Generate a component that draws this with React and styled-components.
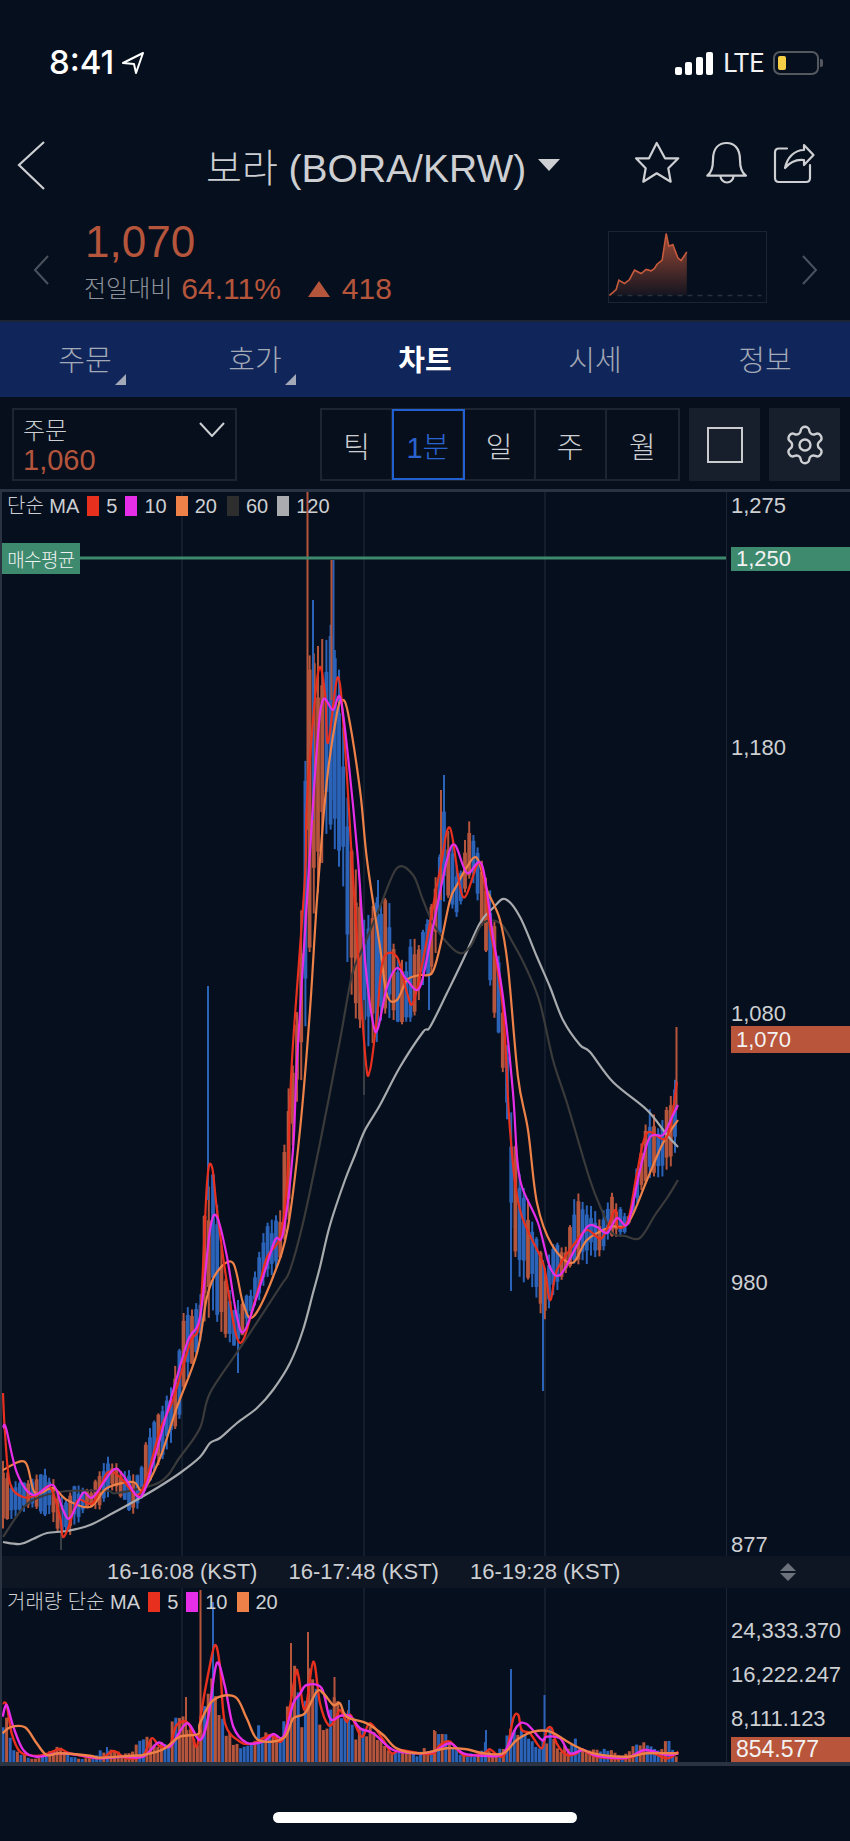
import React from 'react';
import styled, { createGlobalStyle } from 'styled-components';
import { Settings } from 'lucide-react';

const BG = '#060f1e';
const RED = '#b5553c';
const BLUE = '#2b63b8';
const TEXT = '#cdcfd2';
const MUTED = '#8d929a';
const FONT = '"Liberation Sans", "Noto Sans CJK KR", sans-serif';

const GlobalStyle = createGlobalStyle`
  html, body { margin: 0; padding: 0; background: ${BG}; }
  body { font-family: ${FONT}; font-weight: 300; }
`;

const Page = styled.div`
  width: 850px;
  height: 1841px;
  overflow: hidden;
  background: ${BG};
  color: ${TEXT};
`;

/* status bar */
const StatusBar = styled.div`
  height: 110px;
  box-sizing: border-box;
  padding: 46px 31px 0 49px;
  display: flex;
  align-items: flex-start;
`;
const Time = styled.span`
  font-family: Inter, sans-serif;
  font-size: 33px;
  line-height: 32px;
  font-weight: 500;
  color: #fff;
  margin-right: 7px;
`;
const StatusRight = styled.div`
  margin-left: auto;
  margin-top: 3px;
  display: flex;
  align-items: center;
  height: 28px;
`;
const Signal = styled.div`
  display: flex;
  align-items: flex-end;
  gap: 3.4px;
  height: 23px;
  margin-right: 10px;
`;
const SignalBar = styled.i`
  display: block;
  width: 7px;
  height: ${p => p.$h}px;
  background: #fff;
  border-radius: 2px;
`;
const Lte = styled.span`
  font-family: Roboto, sans-serif;
  font-size: 26px;
  font-weight: 400;
  color: #f2f2f2;
  margin-right: 9px;
`;
const Battery = styled.div`
  position: relative;
  width: 46px;
  height: 24px;
  box-sizing: border-box;
  border: 2px solid #55595f;
  border-radius: 7px;
  padding: 3px;
  &::after {
    content: '';
    position: absolute;
    right: -6px;
    top: 6px;
    width: 3px;
    height: 8px;
    background: #55595f;
    border-radius: 0 2px 2px 0;
  }
`;
const BatteryFill = styled.div`
  width: 8px;
  height: 100%;
  background: #f7cf46;
  border-radius: 2px;
`;

/* title row */
const Header = styled.div`
  height: 110px;
  display: flex;
  align-items: center;
  position: relative;
  padding-left: 17px;
  box-sizing: border-box;
`;
const Title = styled.div`
  margin-left: 160px;
  display: flex;
  align-items: center;
  font-size: 39px;
  color: ${TEXT};
  white-space: nowrap;
`;
const Caret = styled.i`
  display: block;
  width: 0;
  height: 0;
  margin-left: 12px;
  border-left: 11px solid transparent;
  border-right: 11px solid transparent;
  border-top: 12px solid ${TEXT};
`;
const HeaderIcons = styled.div`
  margin-left: auto;
  display: flex;
  align-items: center;
`;

/* price row */
const PriceRow = styled.div`
  height: 100px;
  box-sizing: border-box;
  display: flex;
  align-items: center;
  padding-left: 33px;
`;
const PriceBlock = styled.div`
  margin-left: 34px;
  display: flex;
  flex-direction: column;
  align-self: flex-start;
`;
const Price = styled.div`
  font-size: 44px;
  line-height: 44px;
  margin-left: 1px;
  color: ${RED};
`;
const Delta = styled.div`
  display: flex;
  align-items: center;
  font-size: 30px;
  line-height: 34px;
  margin-top: 8px;
  color: ${RED};
`;
const DeltaLabel = styled.span`
  color: ${MUTED};
  font-size: 24px;
  margin-right: 9px;
`;
const UpMark = styled.i`
  display: block;
  width: 0;
  height: 0;
  margin: 0 12px 0 27px;
  border-left: 11.5px solid transparent;
  border-right: 11.5px solid transparent;
  border-bottom: 16px solid ${RED};
`;
const MiniChart = styled.div`
  margin-left: auto;
  margin-right: 34px;
  width: 159px;
  height: 72px;
  box-sizing: border-box;
  border: 1.5px solid #1b2431;
  align-self: flex-start;
  margin-top: 11px;
`;
const NextIcon = styled.div`
  margin-right: 32px;
  display: flex;
`;

/* tabs */
const Tabs = styled.div`
  height: 75px;
  background: #10265a;
  border-top: 2px solid #1b2536;
  display: grid;
  grid-template-columns: repeat(5, 170px);
`;
const Tab = styled.div`
  position: relative;
  display: flex;
  align-items: center;
  justify-content: center;
  font-size: 29px;
  padding-bottom: 3px;
  font-weight: ${p => (p.$active ? 700 : 300)};
  color: ${p => (p.$active ? '#fff' : '#a3a9b6')};
`;
const TabCorner = styled.i`
  position: absolute;
  right: 44px;
  bottom: 12px;
  width: 0;
  height: 0;
  border-left: 11px solid transparent;
  border-bottom: 11px solid #a3a9b6;
`;

/* toolbar */
const Toolbar = styled.div`
  height: 92px;
  box-sizing: border-box;
  padding: 11px 9px 8px 12px;
  display: flex;
  background: #070f1d;
`;
const Order = styled.div`
  width: 225px;
  flex: none;
  box-sizing: border-box;
  border: 2px solid #1d2531;
  padding: 7px 9px;
  position: relative;
`;
const OrderLabel = styled.div`
  font-size: 24px;
  line-height: 28px;
  color: ${TEXT};
`;
const OrderPrice = styled.div`
  font-size: 29px;
  line-height: 30px;
  color: ${RED};
`;
const OrderChevron = styled.svg`
  position: absolute;
  right: 10px;
  top: 12px;
`;
const Segments = styled.div`
  margin-left: 83px;
  flex: none;
  display: grid;
  grid-template-columns: repeat(5, 1fr);
  border: 2px solid #1d2531;
  box-sizing: border-box;
  width: 360px;
`;
const Segment = styled.div`
  display: flex;
  align-items: center;
  justify-content: center;
  font-size: 29px;
  box-sizing: border-box;
  border-right: 2px solid #1d2531;
  color: ${TEXT};
  &:last-child { border-right: 0; }
  ${p => p.$active && `
    color: #2a63cf;
    outline: 2px solid #2160d0;
    outline-offset: -1px;
    z-index: 1;
  `}
`;
const ToolButton = styled.div`
  width: 71px;
  flex: none;
  margin-left: 9px;
  background: #171f2c;
  display: flex;
  align-items: center;
  justify-content: center;
  color: ${TEXT};
`;
const SquareMark = styled.i`
  display: block;
  width: 36px;
  height: 36px;
  box-sizing: border-box;
  border: 2.5px solid #c9cbcf;
`;

/* charts */
const ChartFrame = styled.div`
  border-top: 3px solid #2a3342;
  border-bottom: 4px solid #2a3342;
  border-left: 2px solid #2a3342;
  box-sizing: border-box;
`;
const Pane = styled.div`
  display: flex;
  height: ${p => p.$h}px;
`;
const Plot = styled.div`
  position: relative;
  width: 724px;
  height: 100%;
  overflow: hidden;
  svg { display: block; }
`;
const Legend = styled.div`
  position: absolute;
  left: 5px;
  top: 3px;
  display: flex;
  align-items: center;
  font-size: 20px;
  line-height: 22px;
  color: ${TEXT};
  white-space: nowrap;
`;
const Swatch = styled.i`
  display: block;
  width: 12px;
  height: 20px;
  margin: 0 7px 0 ${p => p.$gap}px;
  background: ${p => p.$color};
`;
const AvgTag = styled.div`
  position: absolute;
  left: 0;
  top: 51px;
  width: 78px;
  height: 31px;
  display: flex;
  align-items: center;
  justify-content: center;
  background: #3e8a6e;
  color: #f0f3f2;
  font-size: 19px;
  letter-spacing: -0.6px;
  white-space: nowrap;
`;
const Axis = styled.div`
  position: relative;
  width: 124px;
  height: 100%;
  border-left: 1.5px solid #1b2431;
  box-sizing: border-box;
  font-size: 22px;
`;
const AxisLabel = styled.div`
  position: absolute;
  left: 4px;
  top: ${p => p.$y}px;
  height: 26px;
  line-height: 26px;
  transform: translateY(-50%);
  color: ${TEXT};
  white-space: nowrap;
`;
const AxisTag = styled.div`
  position: absolute;
  left: 4px;
  right: 0;
  top: ${p => p.$y}px;
  height: ${p => p.$h}px;
  line-height: ${p => p.$h}px;
  padding-left: 5px;
  background: ${p => p.$bg};
  color: #f2f2f2;
  font-size: ${p => p.$size}px;
`;
const TimeAxis = styled.div`
  height: 32px;
  background: #0e1624;
  display: flex;
  align-items: center;
  padding-left: 89.5px;
  font-size: 22px;
  color: ${TEXT};
`;
const TimeLabel = styled.div`
  width: 181.5px;
  text-align: center;
  white-space: nowrap;
`;
const Updown = styled.svg`
  margin-left: 143px;
`;
const HomeArea = styled.div`
  height: 75px;
  display: flex;
  justify-content: center;
  padding-top: 46px;
  box-sizing: border-box;
`;
const HomeBar = styled.div`
  width: 304px;
  height: 11px;
  border-radius: 6px;
  background: #fff;
`;

/* data */
const trace = (pts, ox, oy) => pts.map(([x, y]) => [ox + x / 3, oy + y / 3]);

const smooth = pts => {
  let d = `M${pts[0][0].toFixed(1)} ${pts[0][1].toFixed(1)}`;
  for (let i = 0; i < pts.length - 1; i++) {
    const p0 = pts[i - 1] || pts[i];
    const p1 = pts[i];
    const p2 = pts[i + 1];
    const p3 = pts[i + 2] || p2;
    const c1x = p1[0] + (p2[0] - p0[0]) / 6;
    const c1y = p1[1] + (p2[1] - p0[1]) / 6;
    const c2x = p2[0] - (p3[0] - p1[0]) / 6;
    const c2y = p2[1] - (p3[1] - p1[1]) / 6;
    d += `C${c1x.toFixed(1)} ${c1y.toFixed(1)} ${c2x.toFixed(1)} ${c2y.toFixed(1)} ${p2[0].toFixed(1)} ${p2[1].toFixed(1)}`;
  }
  return d;
};

const lerp = (pts, x) => {
  if (x <= pts[0][0]) return pts[0][1];
  for (let i = 1; i < pts.length; i++) {
    if (x <= pts[i][0]) {
      const t = (x - pts[i - 1][0]) / (pts[i][0] - pts[i - 1][0]);
      return pts[i - 1][1] + t * (pts[i][1] - pts[i - 1][1]);
    }
  }
  return pts[pts.length - 1][1];
};

const seeded = seed => () => {
  seed = (seed + 0x6d2b79f5) | 0;
  let t = Math.imul(seed ^ (seed >>> 15), 1 | seed);
  t = (t + Math.imul(t ^ (t >>> 7), 61 | t)) ^ t;
  return ((t ^ (t >>> 14)) >>> 0) / 4294967296;
};

const MA5 = [[3,1393],[5,1433],[10,1483],[23,1497],[37,1495],[50,1487],[60,1517],[63,1537],[70,1523],[78,1500],[93,1503],[107,1473],[120,1477],[137,1495],[147,1477],[160,1430],[173,1400],[190,1343],[200,1317],[207,1183],[212,1167],[217,1210],[227,1283],[240,1343],[257,1293],[267,1257],[280,1237],[287,1183],[292,1060],[305,877],[307,800],[318,673],[325,693],[328,743],[338,677],[345,747],[353,877],[365,1053],[370,1070],[377,1017],[383,960],[397,957],[407,993],[413,1003],[423,960],[440,870],[450,828],[463,897],[480,863],[490,927],[503,1010],[510,1130],[520,1210],[543,1263],[550,1300],[557,1270],[575,1243],[587,1230],[602,1238],[615,1210],[618,1227],[628,1220],[637,1173],[647,1133],[667,1137],[677,1082]];
const MA10 = [[3,1428],[6,1428],[17,1473],[33,1495],[53,1485],[63,1510],[70,1518],[83,1493],[93,1497],[113,1470],[123,1475],[140,1497],[153,1463],[167,1413],[187,1343],[200,1317],[210,1230],[217,1217],[227,1257],[237,1317],[245,1330],[263,1277],[275,1240],[283,1233],[293,1150],[297,1060],[307,900],[317,747],[323,700],[333,710],[340,697],[347,747],[358,860],[365,960],[373,1023],[378,1028],[387,987],[397,968],[407,980],[420,987],[433,927],[447,860],[455,845],[467,873],[482,865],[493,937],[503,997],[513,1093],[517,1157],[522,1187],[538,1223],[550,1267],[560,1275],[573,1253],[587,1227],[597,1227],[607,1233],[617,1218],[628,1223],[640,1170],[650,1137],[663,1135],[672,1117],[678,1105]];
const MA20 = [[3,1470],[25,1462],[35,1493],[53,1488],[67,1500],[90,1507],[107,1488],[133,1482],[143,1490],[160,1458],[177,1407],[197,1353],[207,1297],[217,1272],[233,1263],[243,1303],[253,1317],[273,1277],[288,1227],[300,1130],[310,1010],[317,900],[327,780],[337,713],[342,700],[348,713],[360,790],[367,860],[380,947],[387,995],[397,1000],[407,980],[420,975],[432,973],[440,947],[450,900],[457,885],[467,867],[477,858],[487,890],[500,920],[508,967],[518,1077],[528,1130],[537,1203],[552,1245],[572,1263],[587,1240],[610,1227],[628,1223],[647,1180],[663,1143],[678,1120]];
const MA60 = [[3,1537],[23,1508],[40,1497],[67,1491],[107,1491],[117,1493],[160,1482],[180,1457],[200,1428],[210,1393],[240,1348],[280,1287],[290,1270],[303,1223],[320,1143],[340,1040],[352,975],[362,950],[380,907],[397,868],[413,875],[423,900],[435,927],[457,952],[470,947],[483,923],[500,923],[513,943],[527,970],[540,1003],[553,1060],[567,1103],[590,1180],[603,1213],[612,1233],[625,1236],[640,1238],[655,1215],[667,1198],[678,1180]];
const MA120 = [[3,1542],[20,1544],[33,1539],[47,1533],[67,1531],[90,1525],[113,1513],[133,1502],[157,1488],[180,1473],[200,1457],[210,1443],[220,1438],[237,1423],[257,1408],[273,1390],[290,1363],[303,1330],[313,1293],[320,1267],[330,1225],[345,1180],[355,1155],[365,1130],[380,1105],[400,1067],[423,1032],[430,1027],[447,993],[463,960],[480,923],[493,908],[505,899],[520,917],[537,957],[550,987],[563,1020],[580,1045],[590,1052],[613,1082],[647,1110],[667,1135],[678,1147]];

const UPPER = [[3,1450],[10,1480],[30,1480],[45,1465],[55,1480],[65,1500],[75,1480],[90,1490],[107,1455],[125,1470],[140,1470],[150,1420],[165,1395],[175,1365],[185,1300],[200,1300],[205,1190],[210,1170],[215,1170],[225,1270],[235,1310],[250,1290],[262,1230],[270,1215],[282,1205],[286,1100],[292,1060],[298,1000],[302,870],[307,700],[311,620],[320,630],[328,610],[333,600],[340,650],[350,830],[358,860],[365,900],[380,890],[388,880],[395,950],[405,960],[410,930],[420,940],[430,900],[440,840],[444,790],[450,830],[460,870],[468,813],[475,840],[490,880],[500,960],[510,1080],[516,1150],[525,1190],[535,1220],[545,1265],[555,1235],[565,1250],[575,1190],[590,1200],[600,1215],[612,1190],[620,1205],[630,1215],[640,1150],[650,1100],[660,1125],[668,1090],[676,1075]];
const LOWER = [[3,1535],[12,1520],[30,1510],[50,1520],[61,1540],[70,1540],[85,1510],[100,1510],[115,1490],[135,1520],[145,1490],[160,1470],[175,1440],[190,1375],[205,1330],[215,1330],[230,1345],[238,1350],[250,1320],[265,1290],[278,1270],[288,1230],[295,1120],[303,1100],[310,960],[318,900],[330,860],[340,870],[350,1000],[360,1040],[364,1075],[372,1060],[380,1040],[390,1020],[405,1030],[412,1025],[420,1000],[435,970],[445,900],[458,920],[470,880],[480,910],[490,1000],[500,1050],[507,1130],[511,1250],[520,1280],[530,1295],[540,1310],[543,1330],[555,1300],[568,1270],[585,1265],[597,1265],[610,1240],[625,1235],[640,1200],[655,1180],[668,1175],[678,1160]];

// long wicks that stand out from the envelope: x, y1, y2, colour
const SPIKES = [
  [307.5, 492, 830, RED], [333.5, 560, 800, BLUE], [331.5, 560, 700, RED], [208, 986, 1200, BLUE],
  [444, 775, 900, BLUE], [441, 790, 900, RED], [543, 1260, 1391, BLUE], [511, 1130, 1291, BLUE],
  [676.5, 1027, 1110, RED], [238, 1300, 1373, BLUE], [61, 1500, 1550, '#3a3f46'], [364, 1000, 1095, '#3a3f46'],
  [378, 880, 1020, BLUE], [429, 920, 1010, BLUE], [313, 600, 820, BLUE],
];

const buildCandles = () => {
  const rnd = seeded(41);
  const out = [];
  for (let x = 3; x <= 678; x += 4.2) {
    const up = lerp(UPPER, x);
    const lo = lerp(LOWER, x);
    const range = lo - up;
    const top = up + rnd() * 0.15 * range;
    const bot = lo - rnd() * 0.15 * range;
    const a = top + rnd() * 0.22 * range;
    const b = bot - rnd() * 0.22 * range;
    out.push({ x, top, bot, a, b: Math.max(b, a + 4), color: rnd() > 0.5 ? RED : BLUE });
  }
  return out;
};

const VOL_TOP = [
  ...trace([[8,340],[25,400],[40,470],[70,490],[100,505],[130,490],[175,458],[200,490],[250,505],[320,470],[390,490],[435,425],[470,460],[505,435],[525,360],[548,360],[570,400],[590,460],[610,280],[625,215],[650,300],[660,370],[700,440],[730,460],[775,405],[800,405],[840,440],[855,345],[885,200],[905,380],[925,155],[945,210],[960,370],[985,400],[1003,262],[1020,370]], 0, 1590),
  ...trace([[27,330],[50,420],[70,380],[100,420],[120,420],[150,490],[195,470],[225,495],[250,470],[270,490],[283,420],[310,430],[322,425],[360,490],[420,490],[437,420],[450,490],[485,470],[500,435],[525,380],[560,420],[590,470],[630,410],[660,470],[703,440],[740,480],[805,468],[850,495],[872,460],[910,448],[940,475],[985,448],[1015,500]], 340, 1590),
];
const VOL_SPIKES = [[200.5, 1590, RED], [213, 1602, BLUE], [291, 1643, RED], [308, 1632, RED], [334.5, 1677, RED], [349, 1700, BLUE], [186, 1697, RED], [511, 1669, BLUE], [544.5, 1695, BLUE], [486, 1730, BLUE], [434, 1730, RED], [107, 1747, BLUE]];

const buildVolume = () => {
  const rnd = seeded(7);
  const out = [];
  for (let x = 3; x <= 678; x += 3.6) {
    const top = lerp(VOL_TOP, x);
    const h = (1762 - top) * (0.6 + rnd() * 0.4);
    out.push({ x, h, color: rnd() > 0.5 ? RED : BLUE });
  }
  return out;
};

const VOL5 = [
  ...trace([[8,340],[20,345],[35,430],[60,485],[100,497],[130,495],[180,478],[210,490],[300,505],[340,483],[380,505],[430,495],[455,445],[480,470],[510,465],[530,405],[565,400],[590,470],[605,360],[625,250],[645,165],[660,230],[675,400],[720,455],[760,460],[810,435],[850,445],[885,260],[895,255],[915,360],[940,215],[960,340],[985,405],[1005,390]], 0, 1590),
  ...trace([[0,360],[20,395],[32,375],[65,440],[90,400],[130,450],[155,490],[180,480],[240,490],[280,490],[300,465],[330,455],[370,495],[430,490],[450,478],[480,500],[500,480],[520,385],[535,375],[545,420],[570,430],[605,475],[620,420],[635,415],[650,460],[680,495],[710,490],[725,478],[770,500],[860,505],[900,490],[920,480],[980,505],[1015,485]], 340, 1590),
];
const VOL10 = [
  ...trace([[8,380],[20,345],[40,410],[70,480],[110,500],[180,490],[250,497],[300,505],[370,500],[430,500],[475,458],[510,470],[560,400],[600,450],[625,380],[650,220],[675,290],[700,410],[740,458],[790,455],[820,432],[850,440],[880,340],[900,312],[920,285],[965,295],[990,385]], 0, 1590),
  ...trace([[0,378],[30,378],[60,415],[100,430],[160,480],[230,490],[280,485],[330,460],[370,490],[430,497],[490,490],[530,410],[560,402],[605,450],[620,440],[660,445],[690,490],[730,480],[770,497],[860,503],[915,480],[980,495],[1015,490]], 340, 1590),
];
const VOL20 = [
  ...trace([[8,430],[30,412],[75,412],[110,460],[140,495],[180,490],[270,497],[300,503],[400,497],[430,495],[490,478],[540,440],[595,432],[600,400],[640,330],[705,320],[740,385],[775,450],[850,445],[880,385],[915,370],[950,305],[970,310],[1000,345]], 0, 1590),
  ...trace([[0,340],[20,380],[80,400],[130,435],[170,475],[240,490],[320,475],[380,478],[430,490],[490,490],[530,450],[580,425],[630,425],[700,465],[760,490],[860,500],[920,490],[1015,490]], 340, 1590),
];

const GRID_X = [182, 364, 545];

const PriceChart = () => (
  <svg width="724" height="1064" viewBox="2 492 724 1064">
    {GRID_X.map(x => <line key={x} x1={x} x2={x} y1="492" y2="1556" stroke="#1a2331" strokeWidth="1.5" />)}
    {buildCandles().map(c => (
      <g key={c.x}>
        <rect x={c.x - 1} y={c.top} width="2" height={c.bot - c.top} fill={c.color} />
        <rect x={c.x - 1.9} y={c.a} width="3.8" height={c.b - c.a} fill={c.color} />
      </g>
    ))}
    {SPIKES.map(([x, a, b, color]) => <rect key={x} x={x - 1} y={a} width="2" height={b - a} fill={color} />)}
    <path d={smooth(MA120)} fill="none" stroke="#a8abae" strokeWidth="2.2" />
    <path d={smooth(MA60)} fill="none" stroke="#3a3a3a" strokeWidth="2.2" />
    <path d={smooth(MA20)} fill="none" stroke="#ee8147" strokeWidth="2.2" />
    <path d={smooth(MA5)} fill="none" stroke="#e8301f" strokeWidth="2.2" />
    <path d={smooth(MA10)} fill="none" stroke="#e62ee8" strokeWidth="2.2" />
    <rect x="2" y="556.5" width="724" height="3" fill="#3e8a6e" />
  </svg>
);

const VolumeChart = () => (
  <svg width="724" height="174" viewBox="2 1588 724 174">
    {GRID_X.map(x => <line key={x} x1={x} x2={x} y1="1588" y2="1762" stroke="#1a2331" strokeWidth="1.5" />)}
    {buildVolume().map(b => <rect key={b.x} x={b.x - 1.5} y={1762 - b.h} width="3" height={b.h} fill={b.color} />)}
    {VOL_SPIKES.map(([x, y, color]) => <rect key={x} x={x - 1} y={y} width="2" height={1762 - y} fill={color} />)}
    <path d={smooth(VOL5)} fill="none" stroke="#e8301f" strokeWidth="2.4" />
    <path d={smooth(VOL10)} fill="none" stroke="#e62ee8" strokeWidth="2.4" />
    <path d={smooth(VOL20)} fill="none" stroke="#ee8147" strokeWidth="2.4" />
  </svg>
);

const MINI = trace([[30,498],[50,480],[58,452],[75,462],[90,450],[105,422],[125,432],[140,420],[155,424],[165,417],[172,405],[188,392],[200,312],[208,350],[220,345],[235,385],[245,393],[262,367]], 600, 130);
const miniLine = MINI.map(p => p.join(',')).join(' ');

const MiniGraph = () => (
  <svg width="156" height="69" viewBox="609.5 232.5 156 69" style={{ display: 'block' }}>
    <defs>
      <linearGradient id="miniFill" x1="0" x2="0" y1="0" y2="1">
        <stop offset="0" stopColor="#b9553a" stopOpacity="0.85" />
        <stop offset="1" stopColor="#b9553a" stopOpacity="0.08" />
      </linearGradient>
    </defs>
    <polygon points={`${miniLine} 687.3,296 610,296`} fill="url(#miniFill)" />
    <polyline points={miniLine} fill="none" stroke="#c65a3c" strokeWidth="1.6" />
    <line x1="618" x2="762" y1="296" y2="296" stroke="#27303d" strokeWidth="1.5" strokeDasharray="5 5" />
  </svg>
);

const Chevron = ({ points, color, width, height, box, strokeWidth = 2 }) => (
  <svg width={width} height={height} viewBox={box} style={{ display: 'block' }}>
    <polyline points={points} fill="none" stroke={color} strokeWidth={strokeWidth} />
  </svg>
);

const HeaderGlyphs = () => (
  <svg width="220" height="60" viewBox="630 135 220 60" style={{ display: 'block' }} fill="none" stroke="#cdcfd2" strokeWidth="2.2" strokeLinejoin="round" strokeLinecap="round">
    <polygon points="656.7,143 665,158.3 678.3,158.3 668.3,168.3 670.7,181.7 656.7,173.3 643.3,181.7 645.7,168.3 636,158.3 649,158.3" />
    <path d="M707.3 175.7C711 173 713 168 713 160C713 148 719 143 726.7 143C734 143 740 148 740 160C740 168 742 173 746 175.7Z" />
    <path d="M720.5 176a6.5 6.5 0 0 0 13 0" />
    <path d="M787 148.5H779Q775 148.5 775 152.5V178Q775 182 779 182H806Q810 182 810 178V165" />
    <path d="M804 145L813.5 155L804 165V160C796 159 790 162 785 168C787 158 794 150 804 150Z" />
  </svg>
);

const App = () => (
  <Page>
    <GlobalStyle />
    <StatusBar>
      <Time>8:41</Time>
      <svg width="24" height="24" viewBox="0 0 24 24" style={{ marginTop: 5 }}>
        <polygon points="22,2 2,12 13,13 15,22" fill="none" stroke="#fff" strokeWidth="2" strokeLinejoin="round" />
      </svg>
      <StatusRight>
        <Signal>
          {[8, 13, 18, 23].map(h => <SignalBar key={h} $h={h} />)}
        </Signal>
        <Lte>LTE</Lte>
        <Battery><BatteryFill /></Battery>
      </StatusRight>
    </StatusBar>

    <Header>
      <Chevron points="27,1 2,24 27,48" color="#cdcfd2" width="29" height="49" box="0 0 29 49" strokeWidth="2.2" />
      <Title>보라 (BORA/KRW)<Caret /></Title>
      <HeaderIcons><HeaderGlyphs /></HeaderIcons>
    </Header>

    <PriceRow>
      <Chevron points="15,1 2,15 15,29" color="#4b525e" width="17" height="30" box="0 0 17 30" />
      <PriceBlock>
        <Price>1,070</Price>
        <Delta>
          <DeltaLabel>전일대비</DeltaLabel>
          64.11%
          <UpMark />
          418
        </Delta>
      </PriceBlock>
      <MiniChart><MiniGraph /></MiniChart>
      <NextIcon>
        <Chevron points="2,1 15,15 2,29" color="#4b525e" width="17" height="30" box="0 0 17 30" />
      </NextIcon>
    </PriceRow>

    <Tabs>
      <Tab>주문<TabCorner /></Tab>
      <Tab>호가<TabCorner /></Tab>
      <Tab $active>차트</Tab>
      <Tab>시세</Tab>
      <Tab>정보</Tab>
    </Tabs>

    <Toolbar>
      <Order>
        <OrderLabel>주문</OrderLabel>
        <OrderPrice>1,060</OrderPrice>
        <OrderChevron width="26" height="15" viewBox="0 0 26 15">
          <polyline points="1,1 13,14 25,1" fill="none" stroke="#cdcfd2" strokeWidth="2" />
        </OrderChevron>
      </Order>
      <Segments>
        <Segment>틱</Segment>
        <Segment $active>1분</Segment>
        <Segment>일</Segment>
        <Segment>주</Segment>
        <Segment>월</Segment>
      </Segments>
      <ToolButton><SquareMark /></ToolButton>
      <ToolButton><Settings size={44} strokeWidth={1.3} /></ToolButton>
    </Toolbar>

    <ChartFrame>
      <Pane $h={1064}>
        <Plot>
          <PriceChart />
          <Legend>
            단순 MA
            <Swatch $gap={8} $color="#e8301f" />5
            <Swatch $gap={8} $color="#e62ee8" />10
            <Swatch $gap={9} $color="#ee8147" />20
            <Swatch $gap={10} $color="#2e2e2e" />60
            <Swatch $gap={9} $color="#a9abae" />120
          </Legend>
          <AvgTag>매수평균</AvgTag>
        </Plot>
        <Axis>
          <AxisLabel $y={14}>1,275</AxisLabel>
          <AxisTag $y={55} $h={24} $bg="#3e8a6e" $size={22}>1,250</AxisTag>
          <AxisLabel $y={256}>1,180</AxisLabel>
          <AxisLabel $y={522}>1,080</AxisLabel>
          <AxisTag $y={534} $h={27} $bg="#b9553a" $size={22}>1,070</AxisTag>
          <AxisLabel $y={791}>980</AxisLabel>
          <AxisLabel $y={1053}>877</AxisLabel>
        </Axis>
      </Pane>
      <TimeAxis>
        <TimeLabel>16-16:08 (KST)</TimeLabel>
        <TimeLabel>16-17:48 (KST)</TimeLabel>
        <TimeLabel>16-19:28 (KST)</TimeLabel>
        <Updown width="18" height="18" viewBox="0 0 18 18">
          <polygon points="9,0 17,8 1,8" fill="#6c727c" />
          <polygon points="9,18 17,10 1,10" fill="#6c727c" />
        </Updown>
      </TimeAxis>
      <Pane $h={174}>
        <Plot>
          <VolumeChart />
          <Legend>
            거래량 단순 MA
            <Swatch $gap={8} $color="#e8301f" />5
            <Swatch $gap={8} $color="#e62ee8" />10
            <Swatch $gap={9} $color="#ee8147" />20
          </Legend>
        </Plot>
        <Axis>
          <AxisLabel $y={43}>24,333.370</AxisLabel>
          <AxisLabel $y={87}>16,222.247</AxisLabel>
          <AxisLabel $y={131}>8,111.123</AxisLabel>
          <AxisTag $y={149} $h={25} $bg="#b9553a" $size={23}>854.577</AxisTag>
        </Axis>
      </Pane>
    </ChartFrame>

    <HomeArea><HomeBar /></HomeArea>
  </Page>
);

export default App;
